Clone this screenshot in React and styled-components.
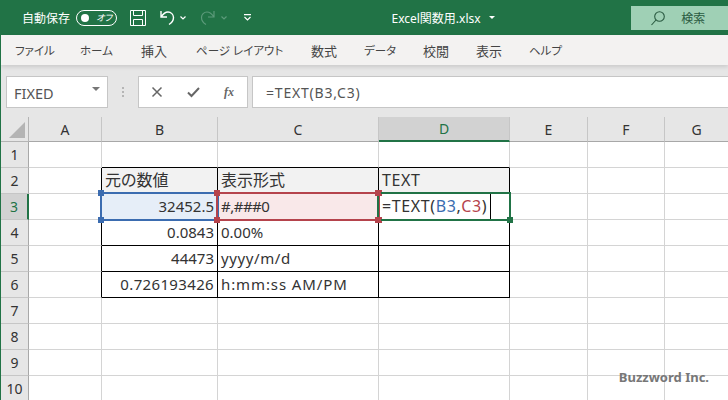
import React from 'react';
import styled, { createGlobalStyle } from 'styled-components';

const GlobalStyle = createGlobalStyle`
  html, body {
    margin: 0;
    padding: 0;
    background: #fff;
  }
  body {
    font-family: "Noto Sans", "Noto Sans CJK JP", sans-serif;
    font-feature-settings: "palt";
  }
`;

const Page = styled.div`
  position: relative;
  width: 728px;
  height: 400px;
  overflow: hidden;
  box-sizing: border-box;
  border-left: 1px solid #217346;
  display: flex;
  flex-direction: column;
`;

const TitleBar = styled.div`
  height: 35px;
  flex: none;
  margin-left: -1px;
  background: #217346;
  color: #fff;
  display: flex;
  align-items: center;
  padding-left: 22px;
`;

const AutoSave = styled.span`
  font-size: 12px;
  width: 55px;
`;

const Toggle = styled.div`
  width: 36px;
  height: 14px;
  border: 1px solid #fff;
  border-radius: 8px;
  display: flex;
  align-items: center;
  padding-left: 4px;
  gap: 7px;
  font-size: 9px;
  font-style: italic;
  margin-right: 13px;
  &::before {
    content: '';
    width: 8px;
    height: 8px;
    border-radius: 50%;
    background: #fff;
  }
`;

const QuickIcon = styled.svg`
  flex: none;
  margin-left: ${props => props.$gap || 0}px;
  fill: none;
  stroke: ${props => props.$dim ? '#5c9a7a' : props.$dark ? '#2a5a41' : '#fff'};
`;

const FileName = styled.div`
  margin-left: 140px;
  width: 244px;
  font-size: 12px;
  display: flex;
  align-items: center;
  gap: 8px;
  &::after {
    content: '';
    border: 3px solid transparent;
    border-top: 3px solid #fff;
    margin-top: 3px;
  }
`;

const SearchBox = styled.div`
  width: 98px;
  height: 24px;
  align-self: flex-start;
  margin-top: 6px;
  background: #9fd0b5;
  color: #2a5a41;
  display: flex;
  align-items: center;
  padding-left: 20px;
  gap: 16px;
  font-size: 12px;
  box-sizing: border-box;
`;

const TabBar = styled.div`
  height: 30px;
  flex: none;
  background: #f3f2f1;
  display: flex;
  align-items: center;
  padding-left: 14px;
  color: #444;
  box-shadow: 0 2px 4px rgba(0, 0, 0, 0.12);
  z-index: 1;
`;

const Tab = styled.span`
  flex: none;
  width: ${props => props.$width}px;
  font-size: ${props => props.$kanji ? '13px' : '11.5px'};
  font-feature-settings: ${props => props.$kanji ? '"normal"' : '"palt"'};
`;

const FormulaArea = styled.div`
  height: 52px;
  flex: none;
  box-sizing: border-box;
  background: #e6e6e6;
  padding: 11px 0 9px 5px;
  display: flex;
  align-items: stretch;
`;

const NameBox = styled.div`
  width: 102px;
  box-sizing: border-box;
  background: #fff;
  border: 1px solid #c6c6c6;
  display: flex;
  align-items: center;
  justify-content: space-between;
  padding: 2px 7px 0 7px;
  font-size: 14.5px;
  color: #555;
  &::after {
    content: '';
    border: 4px solid transparent;
    border-top: 4px solid #777;
    margin-bottom: 4px;
  }
`;

const Grip = styled.div`
  width: 30px;
  display: flex;
  justify-content: center;
  align-items: center;
  &::before {
    content: '';
    width: 2px;
    height: 11px;
    background: repeating-linear-gradient(#b5b5b5 0 2px, transparent 2px 4px);
  }
`;

const FxButtons = styled.div`
  width: 110px;
  box-sizing: border-box;
  background: #fff;
  border: 1px solid #c6c6c6;
  display: flex;
  align-items: center;
  justify-content: space-between;
  padding: 0 13px 0 12px;
  margin-right: 4px;
`;

const FxLabel = styled.span`
  font-family: "Liberation Serif", serif;
  font-style: italic;
  font-weight: 700;
  font-size: 12px;
  color: #666;
`;

const FormulaInput = styled.div`
  flex: 1;
  background: #fff;
  border: 1px solid #c6c6c6;
  border-right: 0;
  display: flex;
  align-items: center;
  padding-left: 13px;
  font-size: 14px;
  letter-spacing: 0.8px;
  color: #555;
`;

const Sheet = styled.div`
  flex: 1;
  display: grid;
  grid-template-columns: 28px 73px 116px 161px 131px 78px 77px 64px;
  grid-template-rows: 25px repeat(10, 26px);
  font-size: 15px;
  color: #333;
`;

const Corner = styled.div`
  background: #e6e6e6;
  border-right: 1px solid #b4b4b4;
  border-bottom: 1px solid #b4b4b4;
  position: relative;
  &::after {
    content: '';
    position: absolute;
    right: 3px;
    bottom: 3px;
    border-style: solid;
    border-width: 0 0 16px 16px;
    border-color: transparent transparent #b4b4b4 transparent;
  }
`;

const ColHead = styled.div`
  box-sizing: border-box;
  background: ${props => props.$active ? '#d2d2d2' : '#e6e6e6'};
  border-right: 1px solid #c6c6c6;
  border-bottom: ${props => props.$active ? '2px solid #217346' : '1px solid #a8a8a8'};
  color: ${props => props.$active ? '#217346' : '#333'};
  display: flex;
  align-items: center;
  justify-content: center;
  font-size: 14px;
`;

const RowHead = styled.div`
  box-sizing: border-box;
  background: ${props => props.$active ? '#d2d2d2' : '#e6e6e6'};
  border-right: ${props => props.$active ? '2px solid #217346' : '1px solid #a8a8a8'};
  border-bottom: 1px solid #c6c6c6;
  color: ${props => props.$active ? '#217346' : '#333'};
  display: flex;
  align-items: center;
  justify-content: center;
  font-size: 14px;
`;

const Cell = styled.div`
  position: relative;
  box-sizing: border-box;
  min-width: 0;
  white-space: nowrap;
  padding: 0 3px ${props => props.$cjk ? 4 : 2}px;
  display: flex;
  align-items: center;
  justify-content: ${props => props.$right ? 'flex-end' : 'flex-start'};
  background: ${props => props.$bg || '#fff'};
  border-right: 1px solid ${props => props.$edgeR ? '#000' : '#d4d4d4'};
  border-bottom: 1px solid ${props => props.$edgeB ? '#000' : '#d4d4d4'};
  letter-spacing: ${props => props.$track || 0}px;
  font-size: ${props => props.$cjk || props.$large ? '16px' : '15px'};
  font-feature-settings: ${props => props.$cjk ? '"normal"' : '"palt"'};
`;

const RefBox = styled.div`
  position: absolute;
  z-index: 2;
  top: -2px;
  left: -2px;
  right: -2px;
  bottom: -2px;
  border: 2px solid ${props => props.$color};
  pointer-events: none;
`;

const Handle = styled.i`
  position: absolute;
  width: 6px;
  height: 6px;
  background: ${props => props.$color};
  left: ${props => props.$x === 'l' ? '-4px' : 'auto'};
  right: ${props => props.$x === 'r' ? '-4px' : 'auto'};
  top: ${props => props.$y === 't' ? '-4px' : 'auto'};
  bottom: ${props => props.$y === 'b' ? '-4px' : 'auto'};
`;

const Caret = styled.span`
  position: absolute;
  top: 0;
  bottom: 0;
  left: 111px;
  width: 1px;
  background: #000;
`;

const RefText = styled.span`
  color: ${props => props.$color};
`;

const Watermark = styled.div`
  position: absolute;
  right: 19px;
  bottom: 14px;
  font-family: "Noto Sans", sans-serif;
  font-size: 13px;
  font-weight: 700;
  color: #777;
`;

const columns = ['A', 'B', 'C', 'D', 'E', 'F', 'G'];
const tabs = [
  { label: 'ファイル', width: 65 },
  { label: 'ホーム', width: 61 },
  { label: '挿入', width: 55, kanji: true },
  { label: 'ページ レイアウト', width: 115 },
  { label: '数式', width: 53, kanji: true },
  { label: 'データ', width: 59 },
  { label: '校閲', width: 53, kanji: true },
  { label: '表示', width: 53, kanji: true },
  { label: 'ヘルプ', width: 40 },
];

const BLUE = '#3b6cb0';
const RED = '#b5434c';
const GREEN = '#217346';

const tableRows = {
  2: {
    B: { text: '元の数値', cjk: true },
    C: { text: '表示形式', cjk: true },
    D: { text: 'TEXT', track: 0.600, large: true },
  },
  3: {
    B: { text: '32452.5', right: true },
    C: { text: '#,###0', track: -0.500 },
    D: { track: 0.600, large: true },
  },
  4: { B: { text: '0.0843', right: true }, C: { text: '0.00%' }, D: {} },
  5: { B: { text: '44473', right: true }, C: { text: 'yyyy/m/d', track: 0.600 }, D: {} },
  6: {
    B: { text: '0.726193426', right: true, track: 0.350 },
    C: { text: 'h:mm:ss AM/PM', track: 0.900 },
    D: {},
  },
};

const cellBackground = (row, col) => {
  if (row === 2 && 'BCD'.includes(col)) return '#f2f2f2';
  if (row === 3 && col === 'B') return '#e6eef8';
  if (row === 3 && col === 'C') return '#f9e8e9';
  return undefined;
};

const Handles = ({ color, corners }) => corners.map(([x, y]) => (
  <Handle key={x + y} $color={color} $x={x} $y={y} />
));

const overlayFor = (row, col) => {
  if (row !== 3) return null;
  if (col === 'B') {
    return (
      <RefBox $color={BLUE}>
        <Handles color={BLUE} corners={[['l', 't'], ['l', 'b']]} />
      </RefBox>
    );
  }
  if (col === 'C') {
    return (
      <RefBox $color={RED}>
        <Handles color={RED} corners={[['l', 't'], ['l', 'b'], ['r', 't'], ['r', 'b']]} />
      </RefBox>
    );
  }
  if (col === 'D') {
    return (
      <RefBox $color={GREEN}>
        <Handle $color={GREEN} $x="r" $y="b" />
        <Handle $color={RED} $x="l" $y="t" />
        <Handle $color={RED} $x="l" $y="b" />
      </RefBox>
    );
  }
  return null;
};

const App = () => {
  return (
    <Page>
      <GlobalStyle />
      <TitleBar>
        <AutoSave>自動保存</AutoSave>
        <Toggle>オフ</Toggle>
        <QuickIcon width="16" height="16" viewBox="0 0 16 16" strokeWidth="1">
          <path d="M.5.5h15v15H.5zM3.5.5v5h9v-5M3.5 15.5v-6h9v6" />
        </QuickIcon>
        <QuickIcon $gap={14} width="15" height="16" viewBox="0 0 15 16" strokeWidth="1.4">
          <path d="M1 1v6h6M1 7c2-3 4-5 7-5 3 0 5.500 2.500 5.500 5.500 0 3-2 5.500-4.500 7" />
        </QuickIcon>
        <QuickIcon $gap={5} width="6" height="4" viewBox="0 0 6 4" strokeWidth="1.200">
          <path d="M.5.500 3 3 5.500.500" />
        </QuickIcon>
        <QuickIcon $dim $gap={14} width="15" height="16" viewBox="0 0 15 16" strokeWidth="1.200">
          <path d="M14 1v6H8M14 7c-2-3-4-5-7-5C4 2 1.500 4.500 1.500 7.500c0 3 2 5.500 4.500 7" />
        </QuickIcon>
        <QuickIcon $dim $gap={6} width="6" height="4" viewBox="0 0 6 4" strokeWidth="1.200">
          <path d="M.5.500 3 3 5.500.500" />
        </QuickIcon>
        <QuickIcon $gap={17} width="7" height="7" viewBox="0 0 7 7" strokeWidth="1.200">
          <path d="M0 .6h7M.5 3 3.500 6 6.500 3" />
        </QuickIcon>
        <FileName>Excel関数用.xlsx</FileName>
        <SearchBox>
          <QuickIcon $dark width="14" height="15" viewBox="0 0 14 15" strokeWidth="1.100">
            <circle cx="8.500" cy="5.500" r="4.800" />
            <path d="M5 9 .5 14" />
          </QuickIcon>
          検索
        </SearchBox>
      </TitleBar>

      <TabBar>
        {tabs.map(tab => (
          <Tab key={tab.label} $width={tab.width} $kanji={tab.kanji}>{tab.label}</Tab>
        ))}
      </TabBar>

      <FormulaArea>
        <NameBox>FIXED</NameBox>
        <Grip />
        <FxButtons>
          <svg width="12" height="12" viewBox="0 0 12 12" fill="none" stroke="#666" strokeWidth="1.500">
            <path d="M1.500 1.500l9 9M10.500 1.500l-9 9" />
          </svg>
          <svg width="13" height="12" viewBox="0 0 13 12" fill="none" stroke="#666" strokeWidth="2">
            <path d="M1 6.500l3.500 3.500L12 2" />
          </svg>
          <FxLabel>fx</FxLabel>
        </FxButtons>
        <FormulaInput>=TEXT(B3,C3)</FormulaInput>
      </FormulaArea>

      <Sheet>
        <Corner />
        {columns.map(col => <ColHead key={col} $active={col === 'D'}>{col}</ColHead>)}
        {Array.from({ length: 10 }, (_, i) => i + 1).map(row => (
          <React.Fragment key={row}>
            <RowHead $active={row === 3}>{row}</RowHead>
            {columns.map(col => {
              const data = (tableRows[row] && tableRows[row][col]) || {};
              const inTable = row >= 2 && row <= 6 && 'BCD'.includes(col);
              const edgeB = inTable || (row === 1 && 'BCD'.includes(col));
              const edgeR = inTable || (col === 'A' && row >= 2 && row <= 6);
              return (
                <Cell
                  key={col}
                  $right={data.right}
                  $track={data.track}
                  $cjk={data.cjk}
                  $large={data.large}
                  $bg={cellBackground(row, col)}
                  $edgeR={edgeR}
                  $edgeB={edgeB}
                >
                  {data.text}
                  {row === 3 && col === 'D' && (
                    <>
                      =TEXT(<RefText $color={BLUE}>B3</RefText>,<RefText $color={RED}>C3</RefText>)
                      <Caret />
                    </>
                  )}
                  {overlayFor(row, col)}
                </Cell>
              );
            })}
          </React.Fragment>
        ))}
      </Sheet>
      <Watermark>Buzzword Inc.</Watermark>
    </Page>
  );
};

export default App;
